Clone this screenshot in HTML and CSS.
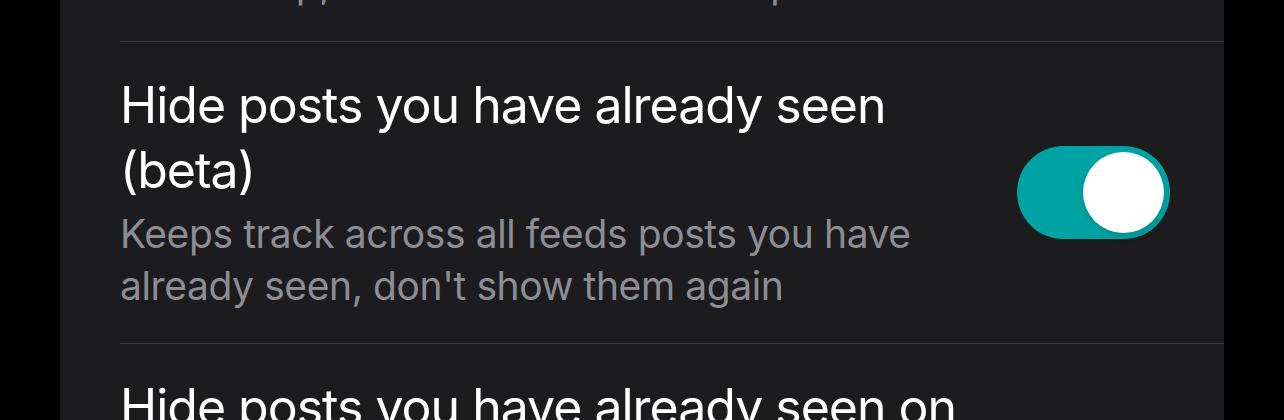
FILE: index.html
```html
<!DOCTYPE html>
<html lang="en">
  <head>
    <meta charset="UTF-8" />
    <meta name="viewport" content="width=device-width, initial-scale=1.0" />
    <title>Settings</title>
    <link rel="stylesheet" href="styles.css">
  </head>
  <body>
    <section class="screen">
      <ul class="settings">
        <li class="setting">
          <div class="setting-text">
            <p class="setting-title">Remember reading position</p>
            <p class="setting-desc">Keeps your place in the feed when it's<br />scrolled up, and then restores the top</p>
          </div>
          <span class="toggle"></span>
        </li>
        <li class="setting">
          <div class="setting-text">
            <p class="setting-title">Hide posts you have already seen (beta)</p>
            <p class="setting-desc">Keeps track across all feeds posts you have already seen, don't show them again</p>
          </div>
          <span class="toggle"></span>
        </li>
        <li class="setting">
          <div class="setting-text">
            <p class="setting-title">Hide posts you have already seen on other devices</p>
            <p class="setting-desc">Syncs the list of seen posts between your devices</p>
          </div>
          <span class="toggle toggle-off"></span>
        </li>
      </ul>
    </section>
  </body>
</html>
```

FILE: styles.css
```css
* {
  box-sizing: border-box;
  font-family: "Inter", "Noto Sans", sans-serif;
}
body {
  margin: 0;
  background-color: #000;
  height: 420px;
  overflow: hidden;
}
.screen {
  margin: 0 60px;
  height: 420px;
  background-color: #1c1c1e;
  overflow: hidden;
}
/* list is scrolled: first row is mostly above the top edge */
.settings {
  list-style: none;
  margin: -195px 0 0;
  padding: 0;
}
.setting {
  display: flex;
  align-items: center;
  gap: 37px;
  margin-left: 60px;
  padding: 31px 54px 31px 0;
  border-bottom: 1px solid #3d3d41;
}
.setting-text {
  flex: 1;
}
.setting-title {
  margin: 0;
  color: #fff;
  font-size: 50px;
  line-height: 65px;
  letter-spacing: -1px;
}
.setting-desc {
  margin: 5px 0 0;
  color: #8d8d93;
  font-size: 39px;
  line-height: 52px;
  letter-spacing: -0.4px;
}
.toggle {
  flex: none;
  display: flex;
  justify-content: flex-end;
  align-items: center;
  width: 153px;
  height: 93px;
  padding: 6px;
  border-radius: 47px;
  background-color: #00a3a4;
}
.toggle::after {
  content: "";
  width: 81px;
  height: 81px;
  border-radius: 50%;
  background-color: #fff;
  box-shadow: 0 3px 8px rgba(0, 0, 0, 0.15);
}
.toggle-off {
  justify-content: flex-start;
  background-color: #39393d;
}
```
